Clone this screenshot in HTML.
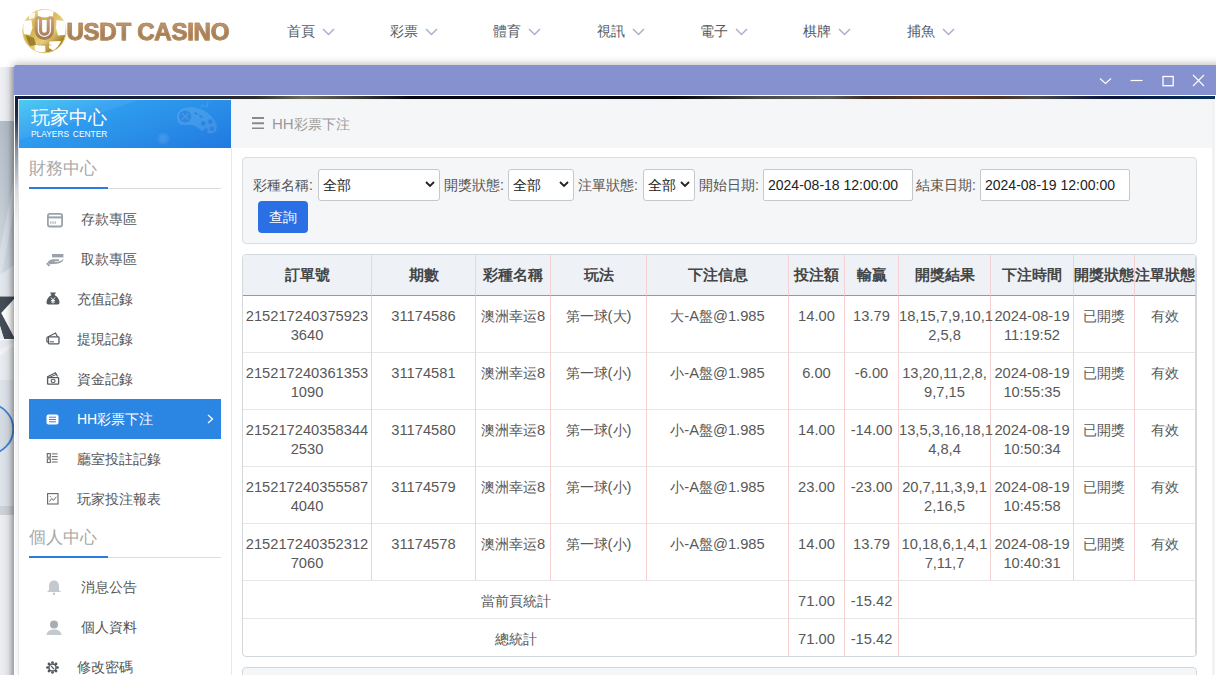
<!DOCTYPE html>
<html><head><meta charset="utf-8">
<style>
*{box-sizing:border-box}
html,body{margin:0;padding:0}
body{width:1216px;height:675px;overflow:hidden;position:relative;background:#fff;font-family:"Liberation Sans",sans-serif;color:#555}
.abs{position:absolute}
/* header */
#logo{left:18px;top:4px;width:54px;height:54px}
#logotxt{left:66.5px;top:18px;font-weight:bold;font-size:24px;letter-spacing:-0.25px;-webkit-text-stroke:0.75px #b08a60;color:#b0865a;
 background:linear-gradient(#c9a27a,#a97c52 60%,#b88d63);-webkit-background-clip:text;background-clip:text;-webkit-text-fill-color:transparent;white-space:nowrap}
.nav{top:22px;font-size:14px;color:#555a66;white-space:nowrap;height:18px;line-height:18px}
.nav svg{position:absolute;left:34.5px;top:6px}
/* page bg left */
#bgleft{left:0;top:60px;width:14px;height:615px;overflow:hidden}
/* window */
#shadow{left:14px;top:65px;width:1210px;height:620px;box-shadow:0 0 8px 1px rgba(0,0,0,.28)}
#title{left:14px;top:65px;width:1202px;height:30px;background:#8692cf;border-radius:2px 0 0 0}
#frame{left:14px;top:95px;width:1202px;height:580px;background:#fff}
#ftop{left:15px;top:96px;width:1200px;height:3px;background:linear-gradient(90deg,#0c1a3c 0%,#1a2238 12%,#2a2c2a 20%,#6c6c5c 24%,#383836 29%,#050510 33%,#030308 55%,#4a4a48 62%,#5a5a58 68%,#3a2c24 71%,#5e3a26 77%,#4a3222 82%,#4a4a48 85%,#0a1438 91%,#06305a 100%)}
#fleft{left:15px;top:96px;width:3px;height:579px;background:linear-gradient(#0c1a3c 0,#1e2c4a 20px,#8a94a4 55px,#d8dce2 95px,#f4f4f4 130px,#f8f8f8 100%)}
#fline{left:18px;top:99px;width:1px;height:576px;background:#e4e4e4}
#ftopline{left:18px;top:99px;width:1197px;height:1px;background:#eef0f2}
#fright{left:1212px;top:99px;width:3px;height:576px;background:#f2f2f2}
/* sidebar */
#sbhead{left:19px;top:100px;width:212px;height:48px;overflow:hidden;background:linear-gradient(160deg,#3ec8f2 0%,#2e9ef0 30%,#2a8fe8 60%,#2079e0 100%)}
#sb{left:19px;top:148px;width:213px;height:527px;background:#fff;border-right:1px solid #e6e8ec}
.sect{left:29px;font-size:17px;color:#a8a8a8;white-space:nowrap;line-height:20px;height:20px}
.uline{left:29px;width:192px;height:2px;background:linear-gradient(90deg,#2a7de0 0,#2a7de0 79px,transparent 79px)}
.ulg{left:29px;width:192px;height:1px;background:#dcdcdc}
.item{left:29px;width:192px;height:40px;font-size:14px;color:#555;line-height:40px;white-space:nowrap}
.item .t{position:absolute;left:48px;top:0}
.item svg{position:absolute}
.item.act{background:#2b85e2;color:#fff}
/* main */
#crumb{left:231px;top:100px;width:981px;height:48px;background:#f5f6f8}
#main{left:232px;top:148px;width:980px;height:527px;background:#fff}
#card{left:242px;top:157px;width:955px;height:87px;background:#f5f6f8;border:1px solid #d9dde2;border-radius:4px}
.lbl{font-size:14px;color:#555;white-space:nowrap;top:176px;line-height:18px}
.sel{top:169px;height:32px;background:#fff;border:1px solid #c6c8cc;border-radius:3px;font-size:14px;color:#222;line-height:30px;padding-left:4px;white-space:nowrap}
.sel svg{position:absolute;right:4px;top:11px}
.inp{top:169px;height:32px;background:#fff;border:1px solid #c6c8cc;border-radius:2px;font-size:14px;color:#222;line-height:30px;padding-left:4px;white-space:nowrap}
#btn{left:258px;top:201px;width:50px;height:32px;background:#2a6fe4;border-radius:4px;color:#fff;font-size:14px;line-height:32px;text-align:center}
#tbl{left:242px;top:254px;width:955px;height:403px;border:1px solid #d3d8dd;border-radius:4px;overflow:hidden;background:#fff}
#tbl table{border-collapse:separate;border-spacing:0;table-layout:fixed;width:953px}
#tbl th,#tbl td{padding:0;text-align:center;border-right:1px solid #f5d0d2;border-bottom:1px solid #e6e6e6;white-space:nowrap;overflow:visible}
#tbl th{height:41px;background:#eef2f6;font-weight:bold;font-size:15px;color:#454545;border-bottom:1px solid #9e9696;line-height:20px}
#tbl tr.bd td{height:57px;vertical-align:top;padding-top:11px;font-size:14.7px;line-height:19px;color:#585858}
#tbl tr.sm td{height:38px;font-size:14.7px;line-height:19px;color:#585858}
#tbl tr.sm.last td{border-bottom:0;height:37px}
#tbl td .c{font-size:14px}
#tbl tr.sm td{padding-top:3px}
#card2{left:242px;top:667px;width:955px;height:40px;background:#f5f6f8;border:1px solid #d3d8dd;border-radius:4px}
</style></head><body>

<!-- header -->
<svg id="logo" class="abs" viewBox="0 0 54 54" width="54" height="54">
 <defs>
  <linearGradient id="gold" x1="0" y1="0" x2="1" y2="1"><stop offset="0" stop-color="#f0e0a0"/><stop offset=".35" stop-color="#d4b24a"/><stop offset=".6" stop-color="#e6cf78"/><stop offset=".8" stop-color="#a88426"/><stop offset="1" stop-color="#c8a848"/></linearGradient>
  <linearGradient id="ug" x1="0" y1="0" x2="0" y2="1"><stop offset="0" stop-color="#c9a07a"/><stop offset="1" stop-color="#a87c56"/></linearGradient>
 </defs>
 <circle cx="26.4" cy="27.2" r="21.6" fill="url(#gold)" stroke="#e2cc80" stroke-width="1"/>
 <g fill="#fff">
  <path d="M19.5 7 L27 5.6 L35.5 7 L35 12.5 L27 13.5 L20 12.5 Z"/>
  <path d="M6.5 17 L13.5 16 L14.5 24 L12 31 L6 30 C5 26,5 21,6.5 17 Z"/>
  <path d="M10.5 9.5 L17.5 8.5 L16.5 14 L11 15.5 Z" opacity=".85"/>
  <path d="M38.5 16 L46.5 17 C48 21,48 26,47 31 L40 31.5 L38 24 Z"/>
  <path d="M16.5 41 L27 41.5 L27.5 47.5 C24 48.5,20 48,17 46.5 Z"/>
  <path d="M31.5 37.5 L43 37 C41.5 41,39 44,35 46.5 L31 44 Z"/>
 </g>
 <path d="M8 31 L16 34 L18 41 L12 42 C10 39,8.5 35,8 31 Z" fill="#8e7024" opacity=".8"/>
 <path d="M20.4 16 V26.4 a6 6 0 0 0 12 0 V16 Z" fill="#fff"/>
 <path d="M20.4 16 V26.4 a6 6 0 0 0 12 0 V16" fill="none" stroke="url(#ug)" stroke-width="7.4" stroke-linecap="round"/>
 <path d="M20.4 16 V26.4 a6 6 0 0 0 12 0 V16" fill="none" stroke="#fff" stroke-width="1.3" stroke-linecap="round" opacity=".95"/>
 <text x="26.5" y="41.5" font-size="4.6" fill="#b89a78" text-anchor="middle" font-family="Liberation Serif" font-style="italic">Casino</text>
</svg>
<div id="logotxt" class="abs">USDT CASINO</div>

<div class="nav abs" style="left:287px">首頁<svg width="13" height="8" viewBox="0 0 13 8"><path d="M1 1 L6.5 6.5 L12 1" fill="none" stroke="#a9b0cc" stroke-width="1.5"/></svg></div>
<div class="nav abs" style="left:390px">彩票<svg width="13" height="8" viewBox="0 0 13 8"><path d="M1 1 L6.5 6.5 L12 1" fill="none" stroke="#a9b0cc" stroke-width="1.5"/></svg></div>
<div class="nav abs" style="left:493px">體育<svg width="13" height="8" viewBox="0 0 13 8"><path d="M1 1 L6.5 6.5 L12 1" fill="none" stroke="#a9b0cc" stroke-width="1.5"/></svg></div>
<div class="nav abs" style="left:597px">視訊<svg width="13" height="8" viewBox="0 0 13 8"><path d="M1 1 L6.5 6.5 L12 1" fill="none" stroke="#a9b0cc" stroke-width="1.5"/></svg></div>
<div class="nav abs" style="left:700px">電子<svg width="13" height="8" viewBox="0 0 13 8"><path d="M1 1 L6.5 6.5 L12 1" fill="none" stroke="#a9b0cc" stroke-width="1.5"/></svg></div>
<div class="nav abs" style="left:803px">棋牌<svg width="13" height="8" viewBox="0 0 13 8"><path d="M1 1 L6.5 6.5 L12 1" fill="none" stroke="#a9b0cc" stroke-width="1.5"/></svg></div>
<div class="nav abs" style="left:907px">捕魚<svg width="13" height="8" viewBox="0 0 13 8"><path d="M1 1 L6.5 6.5 L12 1" fill="none" stroke="#a9b0cc" stroke-width="1.5"/></svg></div>

<!-- background page on left -->
<div id="bgleft" class="abs">
 <svg width="14" height="615" viewBox="0 0 14 615">
  <defs>
   <linearGradient id="bgl" x1="0" y1="0" x2="1" y2="0"><stop offset="0" stop-color="#000" stop-opacity="0"/><stop offset=".6" stop-color="#000" stop-opacity=".04"/><stop offset="1" stop-color="#000" stop-opacity=".2"/></linearGradient>
   <linearGradient id="bgv" x1="0" y1="0" x2="0" y2="1"><stop offset="0" stop-color="#b3bdc8"/><stop offset=".5" stop-color="#c3ccd5"/><stop offset="1" stop-color="#d6dde4"/></linearGradient>
  </defs>
  <rect x="0" y="0" width="14" height="7" fill="#fff"/>
  <rect x="0" y="7" width="14" height="54" fill="#eff0f4"/>
  <rect x="0" y="61" width="14" height="175" fill="url(#bgv)"/>
  <path d="M0 190 L14 120 L14 150 L0 225 Z" fill="#e2e8ee" opacity=".55"/>
  <path d="M0 215 L14 205 L14 236 L0 236 Z" fill="#e6ebf0" opacity=".8"/>
  <path d="M0 236.6 L14 236.6 L14 239 L1.2 253 L14 277 L14 279 L4 279 L0 266 Z" fill="#434c57"/><path d="M0 266 L4 279 L0 279 Z" fill="#e9edf1"/>
  <rect x="0" y="280" width="14" height="40" fill="#e9edf1"/>
  <rect x="0" y="320" width="14" height="130" fill="#dfe4ea"/>
  <path d="M0 290 L14 282 L14 286 L0 296 Z" fill="#f4f6f8" opacity=".8"/>
  <circle cx="-11.7" cy="369" r="25" fill="#d6dce3" stroke="#3f86d8" stroke-width="1.8"/>
  <rect x="0" y="446" width="14" height="9" fill="#cdd2d8"/>
  <rect x="0" y="455" width="14" height="160" fill="#eceef2"/>
  <rect x="0" y="7" width="14" height="608" fill="url(#bgl)"/>
 </svg>
</div>

<!-- window -->
<div id="shadow" class="abs"></div>
<div id="title" class="abs">
 <svg class="abs" style="left:1085px;top:12px" width="13" height="8" viewBox="0 0 13 8"><path d="M1 1.5 L6.5 6.5 L12 1.5" fill="none" stroke="#fff" stroke-width="1.1"/></svg>
 <svg class="abs" style="left:1116px;top:14px" width="13" height="3" viewBox="0 0 13 3"><path d="M0.5 1.5 H12.5" fill="none" stroke="#fff" stroke-width="1.2"/></svg>
 <svg class="abs" style="left:1148px;top:10px" width="12" height="12" viewBox="0 0 12 12"><rect x="1" y="1.5" width="10.2" height="9.2" fill="none" stroke="#fff" stroke-width="1.3"/></svg>
 <svg class="abs" style="left:1178px;top:9px" width="13" height="13" viewBox="0 0 13 13"><path d="M1 1 L12 12 M12 1 L1 12" fill="none" stroke="#fff" stroke-width="1.1"/></svg>
</div>
<div id="frame" class="abs"></div>
<div id="ftop" class="abs"></div>
<div id="fleft" class="abs"></div>
<div id="ftopline" class="abs"></div>
<div id="fline" class="abs"></div>
<div id="fright" class="abs"></div>

<!-- sidebar -->
<div id="sbhead" class="abs">
 <svg class="abs" style="left:0;top:0" width="212" height="48" viewBox="0 0 212 48">
  <path d="M0 0 H120 L0 40 Z" fill="#fff" opacity=".07"/>
  <path d="M158 18 C157 10,165 6.5,175 7.5 C185 8.5,195 16,197.5 25 C199 31,195 34,190 33.3 C184 32.5,180 28,175 25.5 C170 24,165 26,161.5 24.5 C159 23,158 21,158 18 Z" fill="#fff" opacity=".12"/>
  <circle cx="166.2" cy="16.4" r="6" fill="#1670d8" opacity=".45"/>
  <path d="M163 13.5 L169.5 19.5 M169.5 13.5 L163 19.5" stroke="#fff" stroke-width="1.6" opacity=".12"/>
  <g fill="#1670d8" opacity=".45"><circle cx="184.3" cy="23.4" r="2.3"/><circle cx="191.4" cy="21.6" r="2.3"/><circle cx="186.6" cy="30.6" r="2.3"/><circle cx="193" cy="28.8" r="2.3"/></g>
  <path d="M175.5 12.5 L178.5 14.5 M180.5 15.5 L183.5 17.5" stroke="#1670d8" stroke-width="1.6" opacity=".45"/>
  <path d="M182 8 L183 5 L188 7 L189 1" fill="none" stroke="#fff" stroke-width=".9" opacity=".14"/>
  <circle cx="144.2" cy="38.8" r="6" fill="#fff" opacity=".07"/>
  <circle cx="144.2" cy="38.8" r="3.5" fill="#fff" opacity=".05"/>
 </svg>
 <div class="abs" style="left:12px;top:7px;font-size:19px;color:#fff;line-height:22px;white-space:nowrap">玩家中心</div>
 <div class="abs" style="left:12px;top:29px;font-size:8.4px;color:#fff;line-height:11px;white-space:nowrap;word-spacing:1.5px">PLAYERS CENTER</div>
</div>
<div id="sb" class="abs"></div>

<div class="sect abs" style="top:159px">財務中心</div>
<div class="ulg abs" style="top:188px"></div><div class="uline abs" style="top:187px"></div>

<div class="item abs" style="top:199px">
 <svg style="left:18px;top:14px" width="16" height="15" viewBox="0 0 16 15"><rect x="0.9" y="0.9" width="14.2" height="12.6" rx="2" fill="none" stroke="#9aa3ab" stroke-width="1.8"/><rect x="1" y="3.4" width="14" height="2" fill="#9aa3ab"/><path d="M3.8 8.3 V10.8 M6 8.3 V10.8 M8.2 8.3 V10.8" stroke="#9aa3ab" stroke-width="1"/></svg>
 <span class="t" style="left:52px">存款專區</span></div>
<div class="item abs" style="top:239px">
 <svg style="left:17px;top:14px" width="19" height="14" viewBox="0 0 19 14"><rect x="6" y="1" width="11.4" height="3.4" fill="#9aa3ab"/><path d="M1.5 9.3 C3 7.5,5 6.3,7 6.3 H12.5 C13.4 6.3,13.4 8.1,12.5 8.1 H9 L8.6 8.7 H11 C13 8.7,15.5 7.6,17.8 6 C17.2 8.2,14 10.6,10.8 10.8 L3.6 11.3 Z" fill="#9aa3ab"/><path d="M0.9 10.1 L3.4 12.9" stroke="#9aa3ab" stroke-width="2.1"/></svg>
 <span class="t" style="left:52px">取款專區</span></div>
<div class="item abs" style="top:279px">
 <svg style="left:17px;top:13px" width="14" height="13" viewBox="0 0 14 13"><path d="M4 0.5 H10 L8.5 3 C12 4.5,13.5 8,13.5 10.5 C13.5 12,12.5 12.5,11 12.5 H3 C1.5 12.5,0.5 12,0.5 10.5 C0.5 8,2 4.5,5.5 3 Z" fill="#555b60"/><path d="M5 5.5 L7 8 L9 5.5 M5 8.5 H9 M5 10 H9 M7 8 V11.5" stroke="#fff" stroke-width=".9" fill="none"/></svg>
 <span class="t">充值記錄</span></div>
<div class="item abs" style="top:319px">
 <svg style="left:17px;top:13px" width="14" height="13" viewBox="0 0 14 13"><path d="M0.8 5.5 L9.5 1 L11.5 4.8" fill="none" stroke="#555b60" stroke-width="1.2"/><rect x="2.4" y="4.8" width="10.6" height="7" rx=".8" fill="none" stroke="#555b60" stroke-width="1.3"/><path d="M0.8 5.5 V9.5 L2.4 10.5" fill="none" stroke="#555b60" stroke-width="1.1"/><path d="M3.5 9.8 H8" stroke="#555b60" stroke-width="1"/></svg>
 <span class="t">提現記錄</span></div>
<div class="item abs" style="top:359px">
 <svg style="left:17px;top:13px" width="14" height="13" viewBox="0 0 14 13"><path d="M1 5 L9.5 0.8 L11.5 4.5" fill="none" stroke="#555b60" stroke-width="1.2"/><path d="M1.2 6.2 L10 2.6" stroke="#555b60" stroke-width="1"/><rect x="1.6" y="5.6" width="11" height="6.6" rx=".6" fill="none" stroke="#555b60" stroke-width="1.3"/><ellipse cx="7.1" cy="8.9" rx="2" ry="1.6" fill="none" stroke="#555b60" stroke-width="1.1"/></svg>
 <span class="t">資金記錄</span></div>
<div class="item act abs" style="top:399px">
 <svg style="left:17px;top:15px" width="13" height="11" viewBox="0 0 13 11"><rect x="0.5" y="0.5" width="12" height="10" rx="2" fill="#fff"/><path d="M3 3.2 H10 M3 5.5 H10 M3 7.8 H10" stroke="#2b85e2" stroke-width="1"/></svg>
 <span class="t">HH彩票下注</span>
 <svg style="left:178px;top:15px" width="7" height="10" viewBox="0 0 7 10"><path d="M1 1 L5.5 5 L1 9" fill="none" stroke="#fff" stroke-width="1.3"/></svg></div>
<div class="item abs" style="top:439px">
 <svg style="left:17px;top:14px" width="13" height="11" viewBox="0 0 13 11"><rect x="1.3" y="0.6" width="3" height="3.6" fill="none" stroke="#666" stroke-width="1.1"/><rect x="1.3" y="5.9" width="3" height="3.6" fill="none" stroke="#666" stroke-width="1.1"/><path d="M5.8 0.9 H11.6 M5.8 3.6 H11.6 M5.8 6.3 H11.6 M5.8 9 H11.6" stroke="#666" stroke-width="1"/></svg>
 <span class="t">廳室投註記錄</span></div>
<div class="item abs" style="top:479px">
 <svg style="left:18px;top:14px" width="12" height="12" viewBox="0 0 12 12"><rect x="0.6" y="0.6" width="10.4" height="10.4" fill="none" stroke="#666" stroke-width="1.1"/><path d="M2.4 8.6 L4.6 5.6 L6.6 7.2 L9.3 3.8 M3 3.2 L4 4.2" fill="none" stroke="#666" stroke-width="1"/></svg>
 <span class="t">玩家投注報表</span></div>

<div class="sect abs" style="top:528px">個人中心</div>
<div class="ulg abs" style="top:557px"></div><div class="uline abs" style="top:556px"></div>

<div class="item abs" style="top:567px">
 <svg style="left:17px;top:13px" width="16" height="15" viewBox="0 0 16 15"><path d="M8 0.5 C11.5 0.5,13 3,13 6.5 V10 L15 12 H1 L3 10 V6.5 C3 3,4.5 0.5,8 0.5 Z" fill="#c4c9cf"/><circle cx="8" cy="13.7" r="1.3" fill="#c4c9cf"/></svg>
 <span class="t" style="left:52px">消息公告</span></div>
<div class="item abs" style="top:607px">
 <svg style="left:17px;top:13px" width="16" height="15" viewBox="0 0 16 15"><circle cx="8" cy="4.5" r="4" fill="#a6adb4"/><path d="M0.5 15 C1 11,4 9.5,8 9.5 C12 9.5,15 11,15.5 15 Z" fill="#c4c9cf"/></svg>
 <span class="t" style="left:52px">個人資料</span></div>
<div class="item abs" style="top:647px">
 <svg style="left:17px;top:14px" width="13" height="13" viewBox="0 0 13 13"><g fill="#50565c"><circle cx="11.50" cy="6.50" r="1.35"/><circle cx="10.04" cy="10.04" r="1.35"/><circle cx="6.50" cy="11.50" r="1.35"/><circle cx="2.96" cy="10.04" r="1.35"/><circle cx="1.50" cy="6.50" r="1.35"/><circle cx="2.96" cy="2.96" r="1.35"/><circle cx="6.50" cy="1.50" r="1.35"/><circle cx="10.04" cy="2.96" r="1.35"/></g><circle cx="6.5" cy="6.5" r="3.6" fill="none" stroke="#50565c" stroke-width="1.5"/><path d="M5.2 5 L8 8.2" stroke="#50565c" stroke-width="1.2"/></svg>
 <span class="t">修改密碼</span></div>

<!-- main -->
<div id="crumb" class="abs">
 <svg class="abs" style="left:21px;top:17px" width="12" height="12" viewBox="0 0 12 12"><path d="M0 1 H12 M0 6.2 H12 M0 11.4 H12" stroke="#8a8a8a" stroke-width="1.9"/></svg>
 <div class="abs" style="left:41px;top:15px;font-size:15px;color:#9a9a9a;white-space:nowrap;line-height:18px">HH<span style="font-size:14px">彩票下注</span></div>
</div>
<div id="main" class="abs"></div>
<div id="card" class="abs"></div>
<div class="lbl abs" style="left:253px">彩種名稱:</div>
<div class="sel abs" style="left:318px;width:122px">全部<svg width="10" height="7" viewBox="0 0 10 7"><path d="M1 1 L5 5 L9 1" fill="none" stroke="#222" stroke-width="1.8"/></svg></div>
<div class="lbl abs" style="left:444px">開獎狀態:</div>
<div class="sel abs" style="left:508px;width:66px">全部<svg width="10" height="7" viewBox="0 0 10 7"><path d="M1 1 L5 5 L9 1" fill="none" stroke="#222" stroke-width="1.8"/></svg></div>
<div class="lbl abs" style="left:578px">注單狀態:</div>
<div class="sel abs" style="left:643px;width:52px">全部<svg width="10" height="7" viewBox="0 0 10 7" style="right:4px"><path d="M1 1 L5 5 L9 1" fill="none" stroke="#222" stroke-width="1.8"/></svg></div>
<div class="lbl abs" style="left:699px">開始日期:</div>
<div class="inp abs" style="left:763px;width:150px">2024-08-18 12:00:00</div>
<div class="lbl abs" style="left:916px">結束日期:</div>
<div class="inp abs" style="left:980px;width:150px">2024-08-19 12:00:00</div>
<div id="btn" class="abs">查詢</div>

<div id="tbl" class="abs">
<table><colgroup><col style="width:129px"><col style="width:104px"><col style="width:75px"><col style="width:96px"><col style="width:142px"><col style="width:56px"><col style="width:54px"><col style="width:92px"><col style="width:83px"><col style="width:61px"><col style="width:61px"></colgroup>
<tr class="hd"><th>訂單號</th><th>期數</th><th>彩種名稱</th><th>玩法</th><th>下注信息</th><th>投注額</th><th>輸贏</th><th>開獎結果</th><th>下注時間</th><th>開獎狀態</th><th>注單狀態</th></tr>
<tr class="bd"><td>215217240375923<br>3640</td><td>31174586</td><td><span class="c">澳洲幸运</span>8</td><td><span class="c">第一球</span>(<span class="c">大</span>)</td><td><span class="c">大</span>-A<span class="c">盤</span>@1.985</td><td>14.00</td><td>13.79</td><td>18,15,7,9,10,1<br>2,5,8</td><td>2024-08-19<br>11:19:52</td><td><span class="c">已開獎</span></td><td><span class="c">有效</span></td></tr>
<tr class="bd"><td>215217240361353<br>1090</td><td>31174581</td><td><span class="c">澳洲幸运</span>8</td><td><span class="c">第一球</span>(<span class="c">小</span>)</td><td><span class="c">小</span>-A<span class="c">盤</span>@1.985</td><td>6.00</td><td>-6.00</td><td>13,20,11,2,8,<br>9,7,15</td><td>2024-08-19<br>10:55:35</td><td><span class="c">已開獎</span></td><td><span class="c">有效</span></td></tr>
<tr class="bd"><td>215217240358344<br>2530</td><td>31174580</td><td><span class="c">澳洲幸运</span>8</td><td><span class="c">第一球</span>(<span class="c">小</span>)</td><td><span class="c">小</span>-A<span class="c">盤</span>@1.985</td><td>14.00</td><td>-14.00</td><td>13,5,3,16,18,1<br>4,8,4</td><td>2024-08-19<br>10:50:34</td><td><span class="c">已開獎</span></td><td><span class="c">有效</span></td></tr>
<tr class="bd"><td>215217240355587<br>4040</td><td>31174579</td><td><span class="c">澳洲幸运</span>8</td><td><span class="c">第一球</span>(<span class="c">小</span>)</td><td><span class="c">小</span>-A<span class="c">盤</span>@1.985</td><td>23.00</td><td>-23.00</td><td>20,7,11,3,9,1<br>2,16,5</td><td>2024-08-19<br>10:45:58</td><td><span class="c">已開獎</span></td><td><span class="c">有效</span></td></tr>
<tr class="bd"><td>215217240352312<br>7060</td><td>31174578</td><td><span class="c">澳洲幸运</span>8</td><td><span class="c">第一球</span>(<span class="c">小</span>)</td><td><span class="c">小</span>-A<span class="c">盤</span>@1.985</td><td>14.00</td><td>13.79</td><td>10,18,6,1,4,1<br>7,11,7</td><td>2024-08-19<br>10:40:31</td><td><span class="c">已開獎</span></td><td><span class="c">有效</span></td></tr>
<tr class="sm"><td colspan="5" class="nb"><span class="c">當前頁統計</span></td><td>71.00</td><td>-15.42</td><td colspan="4" class="nb2"></td></tr>
<tr class="sm last"><td colspan="5" class="nb"><span class="c">總統計</span></td><td>71.00</td><td>-15.42</td><td colspan="4" class="nb2"></td></tr>
</table>
</div>
<div id="card2" class="abs"></div>

</body></html>
